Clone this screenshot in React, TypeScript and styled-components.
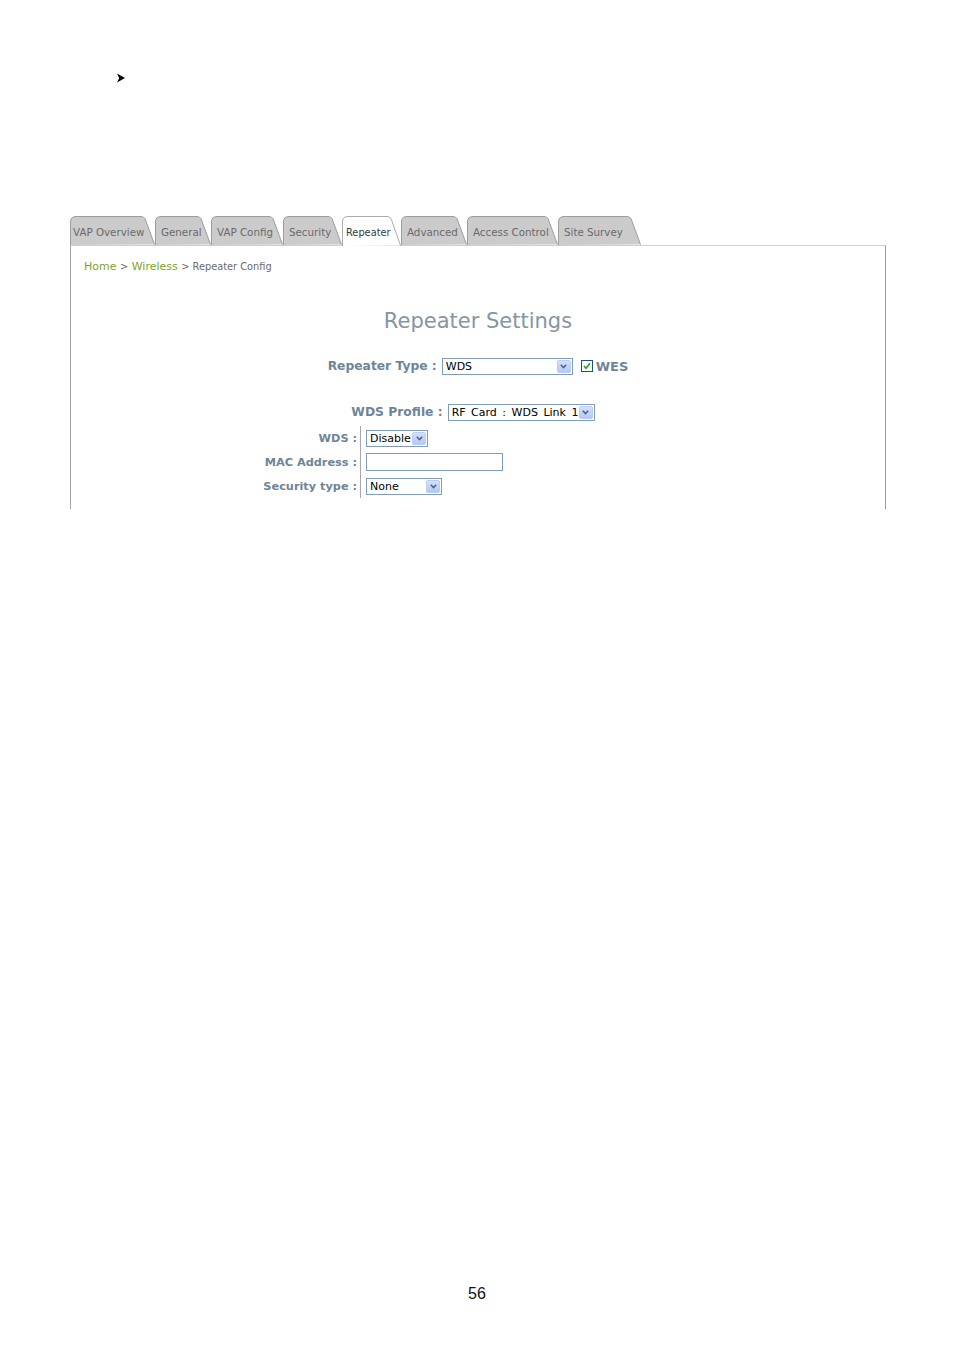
import React from 'react';
import styled, { createGlobalStyle } from 'styled-components';

const GlobalStyle = createGlobalStyle`
  html, body {
    margin: 0;
    padding: 0;
    background: #ffffff;
  }
  body {
    font-family: "DejaVu Sans", Verdana, sans-serif;
  }
`;

const Page = styled.div`
  width: 954px;
  min-height: 1351px;
  display: flex;
  flex-direction: column;
  box-sizing: border-box;
  padding-top: 73px;
  padding-bottom: 48px;
`;

const Bullet = styled.div`
  margin-left: 117px;
  height: 10px;
  display: flex;
`;

const Frame = styled.div`
  margin-top: 133px;
  margin-left: 70px;
  width: 816px;
`;

const TabBar = styled.div`
  display: flex;
  height: 29px;
  position: relative;
  z-index: 1;
`;

const TabItem = styled.div<{ $w: number; $active?: boolean }>`
  position: relative;
  width: ${(p) => p.$w}px;
  height: 29px;
  margin-bottom: ${(p) => (p.$active ? '-1px' : '0')};
  flex: none;
  display: flex;
  align-items: center;
  padding: 3px 0 0 ${(p) => (p.$active ? '4px' : '6px')};
  box-sizing: border-box;
  font-size: ${(p) => (p.$active ? '9.8px' : '10.3px')};
  color: ${(p) => (p.$active ? '#3a3a3a' : '#6a6a6a')};
  white-space: nowrap;
  &:first-child {
    padding-left: 3px;
  }
  & > svg {
    position: absolute;
    left: 0;
    top: 0;
    z-index: -1;
  }
`;

const Panel = styled.div`
  height: 264px;
  box-sizing: border-box;
  border-top: 1px solid #cfcfcf;
  border-left: 1px solid #a3a3a3;
  border-right: 1px solid #9c9c9c;
  padding-top: 14px;
  display: flex;
  flex-direction: column;
`;

const Crumbs = styled.div`
  padding-left: 13px;
  height: 13px;
  line-height: 13px;
  font-size: 11px;
  color: #7fa51a;
  white-space: nowrap;
`;

const CrumbSep = styled.span`
  color: #6a6a6a;
  font-size: 9.8px;
`;

const Title = styled.h1`
  margin: 36px 0 0;
  text-align: center;
  font-weight: normal;
  font-size: 21px;
  line-height: 24px;
  color: #8595a2;
`;

const CenterRow = styled.div<{ $top: number; $shift?: number }>`
  margin-top: ${(p) => p.$top}px;
  display: flex;
  justify-content: center;
  align-items: center;
  height: 18px;
  padding-right: ${(p) => p.$shift ?? 0}px;
`;

const Label = styled.span`
  font-size: 12.3px;
  font-weight: bold;
  color: #6e8597;
  white-space: nowrap;
  margin-right: 5px;
`;

const SelectBox = styled.div<{ $w: number }>`
  width: ${(p) => p.$w}px;
  height: 17px;
  box-sizing: border-box;
  border: 1px solid #7f9db9;
  background: #fff;
  display: flex;
  align-items: center;
  padding: 0 1px 0 3px;
  font-size: 11px;
  word-spacing: 2px;
  color: #000;
  white-space: nowrap;
`;

const SelectText = styled.span`
  flex: 1;
  overflow: hidden;
`;

const ArrowBtn = styled.span`
  width: 14px;
  height: 13px;
  box-sizing: border-box;
  border: 1px solid #bccdf3;
  border-radius: 2px;
  background: linear-gradient(#d4e0fb, #b4c8f4);
  display: flex;
  align-items: center;
  justify-content: center;
`;

const TextInput = styled.div<{ $w: number }>`
  width: ${(p) => p.$w}px;
  height: 18px;
  box-sizing: border-box;
  border: 1px solid #7f9db9;
  background: #fff;
`;

const Check = styled.span`
  margin-left: 8px;
  width: 12px;
  height: 12px;
  box-sizing: border-box;
  border: 1px solid #1c5180;
  background: #fff;
  display: flex;
  align-items: center;
  justify-content: center;
`;

const CheckLabel = styled.span`
  margin-left: 3px;
  font-size: 13px;
  font-weight: bold;
  color: #6e8597;
`;

const Table = styled.div`
  margin-top: 5px;
  margin-left: 176px;
  display: grid;
  grid-template-columns: 113px auto;
  grid-auto-rows: 24px;
  justify-content: start;
`;

const Cell = styled.div<{ $label?: boolean }>`
  display: flex;
  align-items: center;
  justify-content: ${(p) => (p.$label ? 'flex-end' : 'flex-start')};
  padding: ${(p) => (p.$label ? '0 3px 0 0' : '0 0 0 5px')};
  border-left: ${(p) => (p.$label ? 'none' : '1px solid #a8a8a8')};
  font-size: 11.3px;
  font-weight: ${(p) => (p.$label ? 'bold' : 'normal')};
  color: #6e8597;
  white-space: nowrap;
`;

const Footer = styled.div`
  margin-top: auto;
  text-align: center;
  font-family: "Liberation Sans", Arial, sans-serif;
  font-size: 16px;
  line-height: 18px;
  color: #111;
`;

const tabs = [
  { name: 'VAP Overview', w: 85 },
  { name: 'General', w: 56 },
  { name: 'VAP Config', w: 72 },
  { name: 'Security', w: 59 },
  { name: 'Repeater', w: 59, active: true },
  { name: 'Advanced', w: 66 },
  { name: 'Access Control', w: 91 },
  { name: 'Site Survey', w: 83 },
];

function TabShape({ w, active }: { w: number; active?: boolean }) {
  const h = active ? 30 : 29;
  const right = w - 0.5;
  const topRight = w - 11;
  const d = `M0.5,${h} V6 Q0.5,0.5 6,0.5 H${topRight - 3} Q${topRight},0.5 ${topRight + 1.2},3 L${right},${h - 0.5}`;
  return (
    <svg width={w} height={h} viewBox={`0 0 ${w} ${h}`}>
      <path d={`${d} Z`} fill={active ? '#ffffff' : '#cbcbcb'} stroke="none" />
      <path d={d} fill="none" stroke={active ? '#ababab' : '#9d9d9d'} strokeWidth="1" />
    </svg>
  );
}

function Select({ w, value }: { w: number; value: string }) {
  return (
    <SelectBox $w={w}>
      <SelectText>{value}</SelectText>
      <ArrowBtn>
        <svg width="7" height="5" viewBox="0 0 7 5">
          <path d="M0.8,0.8 L3.5,3.6 L6.2,0.8" fill="none" stroke="#4d6185" strokeWidth="1.5" />
        </svg>
      </ArrowBtn>
    </SelectBox>
  );
}

export default function App() {
  return (
    <>
      <GlobalStyle />
      <Page>
        <Bullet>
          <svg width="8" height="10" viewBox="0 0 8 10">
            <path d="M0,0.5 L8,5 L0,9.5 L2.2,5 Z" fill="#000" />
          </svg>
        </Bullet>
        <Frame>
          <TabBar>
            {tabs.map((t) => (
              <TabItem key={t.name} $w={t.w} $active={t.active}>
                <TabShape w={t.w} active={t.active} />
                {t.name}
              </TabItem>
            ))}
          </TabBar>
          <Panel>
            <Crumbs>
              Home <CrumbSep>&gt;</CrumbSep> Wireless <CrumbSep>&gt; Repeater Config</CrumbSep>
            </Crumbs>
            <Title>Repeater Settings</Title>
            <CenterRow $top={24}>
              <Label>Repeater Type :</Label>
              <Select w={131} value="WDS" />
              <Check>
                <svg width="8" height="8" viewBox="0 0 8 8">
                  <path d="M1,4 L3,6.3 L7,1.2" fill="none" stroke="#21a121" strokeWidth="1.6" />
                </svg>
              </Check>
              <CheckLabel>WES</CheckLabel>
            </CenterRow>
            <CenterRow $top={28} $shift={10}>
              <Label>WDS Profile :</Label>
              <Select w={147} value="RF Card : WDS Link 1" />
            </CenterRow>
            <Table>
              <Cell $label>WDS :</Cell>
              <Cell>
                <Select w={62} value="Disable" />
              </Cell>
              <Cell $label>MAC Address :</Cell>
              <Cell>
                <TextInput $w={137} />
              </Cell>
              <Cell $label>Security type :</Cell>
              <Cell>
                <Select w={76} value="None" />
              </Cell>
            </Table>
          </Panel>
        </Frame>
        <Footer>56</Footer>
      </Page>
    </>
  );
}
